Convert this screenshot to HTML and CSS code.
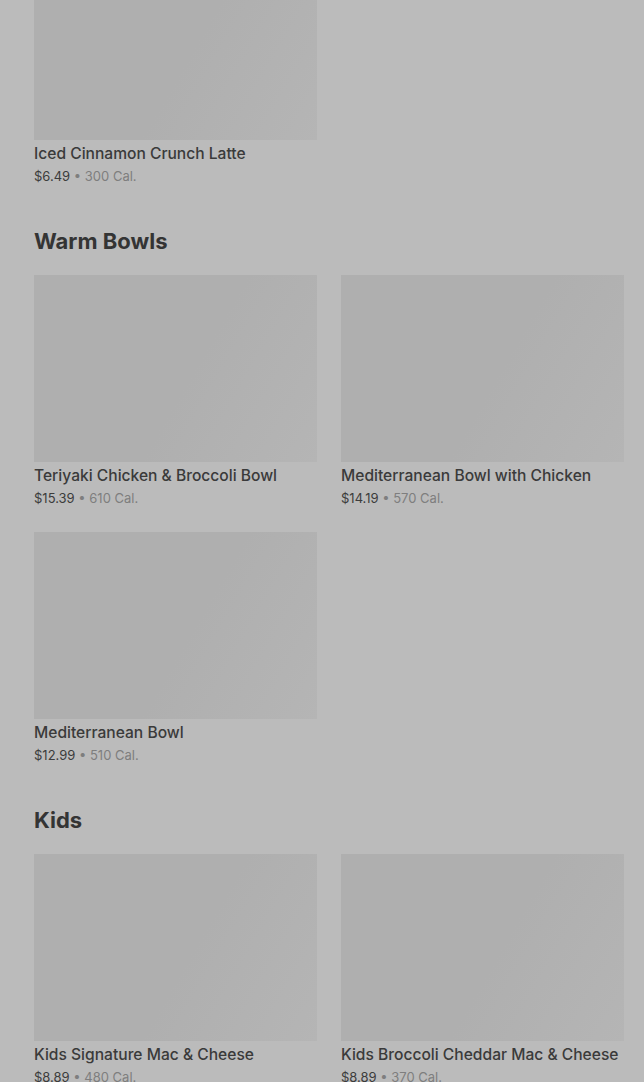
FILE: index.html
```html
<!DOCTYPE html>
<html lang="en">
<head>
  <meta charset="UTF-8" />
  <meta name="viewport" content="width=device-width, initial-scale=1.0" />
  <title>Menu</title>
  <link rel="stylesheet" href="styles.css">
</head>
<body>
  <div class="menu">
    <section class="menu-section first">
      <div class="grid">
        <div class="item">
          <div class="thumb"></div>
          <div class="name">Iced Cinnamon Crunch Latte</div>
          <div class="meta"><span class="price">$6.49</span> • 300 Cal.</div>
        </div>
      </div>
    </section>

    <section class="menu-section">
      <h2>Warm Bowls</h2>
      <div class="grid">
        <div class="item">
          <div class="thumb"></div>
          <div class="name">Teriyaki Chicken &amp; Broccoli Bowl</div>
          <div class="meta"><span class="price">$15.39</span> • 610 Cal.</div>
        </div>
        <div class="item">
          <div class="thumb"></div>
          <div class="name">Mediterranean Bowl with Chicken</div>
          <div class="meta"><span class="price">$14.19</span> • 570 Cal.</div>
        </div>
        <div class="item">
          <div class="thumb"></div>
          <div class="name">Mediterranean Bowl</div>
          <div class="meta"><span class="price">$12.99</span> • 510 Cal.</div>
        </div>
      </div>
    </section>

    <section class="menu-section">
      <h2>Kids</h2>
      <div class="grid">
        <div class="item">
          <div class="thumb"></div>
          <div class="name">Kids Signature Mac &amp; Cheese</div>
          <div class="meta"><span class="price">$8.89</span> • 480 Cal.</div>
        </div>
        <div class="item">
          <div class="thumb"></div>
          <div class="name">Kids Broccoli Cheddar Mac &amp; Cheese</div>
          <div class="meta"><span class="price">$8.89</span> • 370 Cal.</div>
        </div>
      </div>
    </section>
  </div>
</body>
</html>
```

FILE: styles.css
```css
html, body {
  height: 100%;
  overflow: hidden;
}
body {
  margin: 0;
  background: #bbbbbb;
  font-family: Inter, "Noto Sans", sans-serif;
  color: #333;
}
.menu {
  margin-top: -47px;
  padding: 0 20px 0 34px;
}
.menu-section {
  padding-top: 41px;
}
.menu-section.first {
  padding-top: 0;
}
h2 {
  margin: 0 0 20px;
  font-size: 22px;
  line-height: 28px;
  font-weight: 700;
  letter-spacing: 0;
  color: #343434;
}
.grid {
  display: grid;
  grid-template-columns: 283px 283px;
  column-gap: 24px;
  row-gap: 24px;
}
.thumb {
  height: 187px;
  background: linear-gradient(120deg, #afafaf 55%, #b5b5b5 100%);
}
.name {
  margin-top: 2px;
  font-size: 15.6px;
  line-height: 24px;
  font-weight: 500;
  color: #3a3a3a;
  white-space: nowrap;
}
.meta {
  font-size: 13px;
  line-height: 20px;
  color: #7e7e7e;
}
.price {
  color: #3c3c3c;
}
```
